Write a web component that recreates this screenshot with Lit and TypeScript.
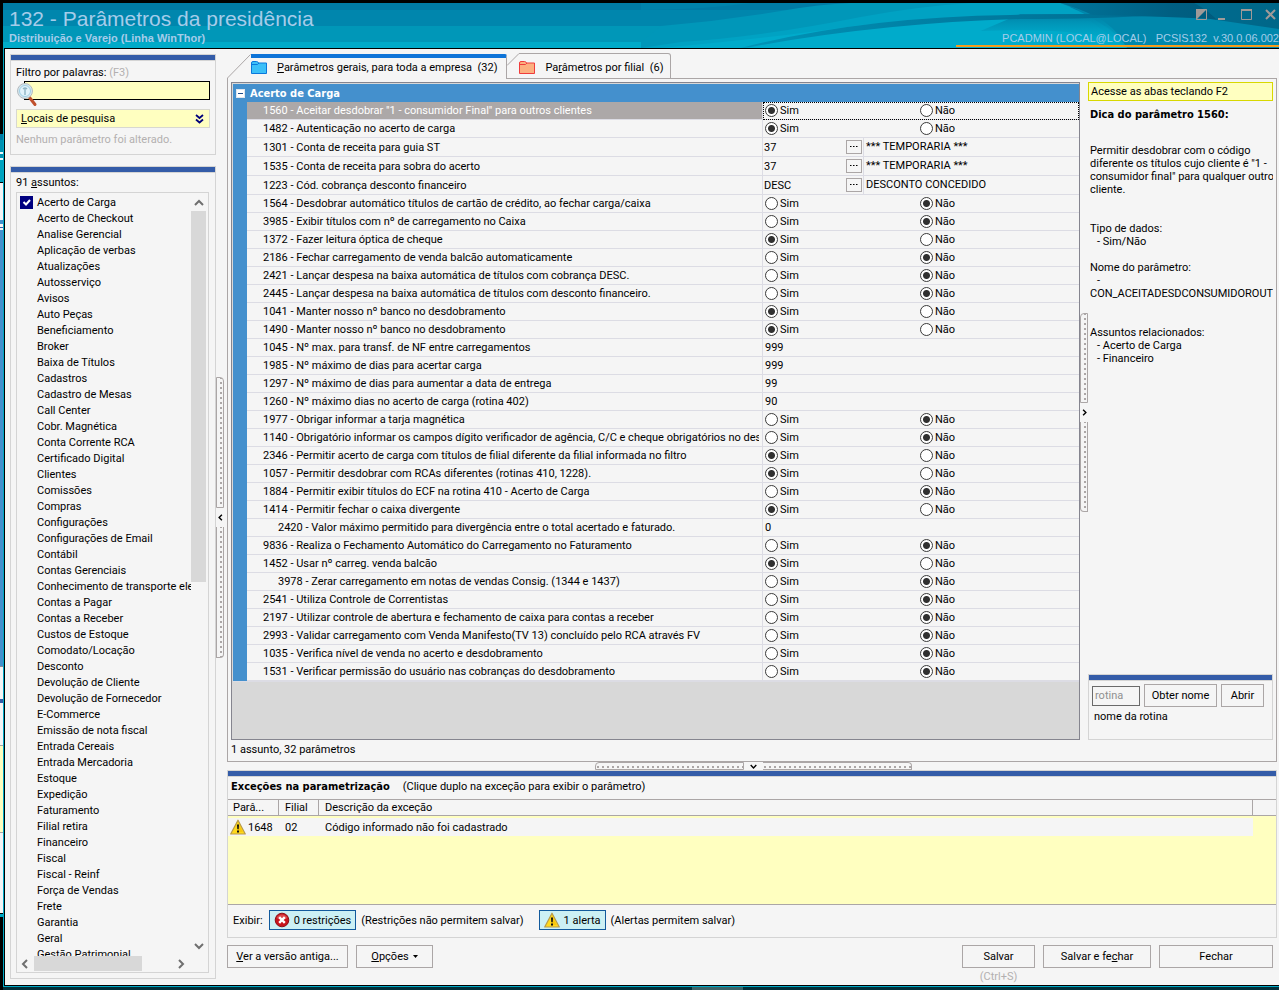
import { LitElement, html, css, svg, nothing } from "lit";
import { customElement, state } from "lit/decorators.js";
import { classMap } from "lit/directives/class-map.js";

type Param = {
  code: string;
  name: string;
  yes?: boolean;
  value?: string;
  lookup?: string;
  child?: boolean;
};

const yn = (code: string, name: string, yes: boolean, child = false): Param => ({ code, name, yes, child });
const val = (code: string, name: string, value: string, child = false): Param => ({ code, name, value, child });

const PARAMS: Param[] = [
  yn("1560", 'Aceitar desdobrar "1 - consumidor Final" para outros clientes', true),
  yn("1482", "Autenticação no acerto de carga", true),
  { code: "1301", name: "Conta de receita para guia ST", value: "37", lookup: "*** TEMPORARIA ***" },
  { code: "1535", name: "Conta de receita para sobra do acerto", value: "37", lookup: "*** TEMPORARIA ***" },
  { code: "1223", name: "Cód. cobrança desconto financeiro", value: "DESC", lookup: "DESCONTO CONCEDIDO" },
  yn("1564", "Desdobrar automático títulos de cartão de crédito, ao fechar carga/caixa", false),
  yn("3985", "Exibir títulos com nº de carregamento no Caixa", false),
  yn("1372", "Fazer leitura óptica de cheque", true),
  yn("2186", "Fechar carregamento de venda balcão automaticamente", false),
  yn("2421", "Lançar despesa na baixa automática de títulos com cobrança DESC.", false),
  yn("2445", "Lançar despesa na baixa automática de títulos com desconto financeiro.", false),
  yn("1041", "Manter nosso nº banco no desdobramento", true),
  yn("1490", "Manter nosso nº banco no desdobramento", true),
  val("1045", "Nº max. para transf. de NF entre carregamentos", "999"),
  val("1985", "Nº máximo de dias para acertar carga", "999"),
  val("1297", "Nº máximo de dias para aumentar a data de entrega", "99"),
  val("1260", "Nº máximo dias no acerto de carga (rotina 402)", "90"),
  yn("1977", "Obrigar informar a tarja magnética", false),
  yn("1140", "Obrigatório informar os campos dígito verificador de agência, C/C e cheque obrigatórios no desdobramento", false),
  yn("2346", "Permitir acerto de carga com títulos de filial diferente da filial informada no filtro", true),
  yn("1057", "Permitir desdobrar com RCAs diferentes (rotinas 410, 1228).", true),
  yn("1884", "Permitir exibir títulos do ECF na rotina 410 - Acerto de Carga", false),
  yn("1414", "Permitir fechar o caixa divergente", true),
  val("2420", "Valor máximo permitido para divergência entre o total acertado e faturado.", "0", true),
  yn("9836", "Realiza o Fechamento Automático do Carregamento no Faturamento", false),
  yn("1452", "Usar nº carreg. venda balcão", true),
  yn("3978", "Zerar carregamento em notas de vendas Consig. (1344 e 1437)", false, true),
  yn("2541", "Utiliza Controle de Correntistas", false),
  yn("2197", "Utilizar controle de abertura e fechamento de caixa para contas a receber", false),
  yn("2993", "Validar carregamento com Venda Manifesto(TV 13) concluído pelo RCA através FV", false),
  yn("1035", "Verifica nível de venda no acerto e desdobramento", false),
  yn("1531", "Verificar permissão do usuário nas cobranças do desdobramento", false),
];

const SUBJECTS = [
  "Acerto de Carga", "Acerto de Checkout", "Analise Gerencial", "Aplicação de verbas", "Atualizações",
  "Autosserviço", "Avisos", "Auto Peças", "Beneficiamento", "Broker", "Baixa de Títulos", "Cadastros",
  "Cadastro de Mesas", "Call Center", "Cobr. Magnética", "Conta Corrente RCA", "Certificado Digital",
  "Clientes", "Comissões", "Compras", "Configurações", "Configurações de Email", "Contábil",
  "Contas Gerenciais", "Conhecimento de transporte eletrônico", "Contas a Pagar", "Contas a Receber",
  "Custos de Estoque", "Comodato/Locação", "Desconto", "Devolução de Cliente", "Devolução de Fornecedor",
  "E-Commerce", "Emissão de nota fiscal", "Entrada Cereais", "Entrada Mercadoria", "Estoque", "Expedição",
  "Faturamento", "Filial retira", "Financeiro", "Fiscal", "Fiscal - Reinf", "Força de Vendas", "Frete",
  "Garantia", "Geral", "Gestão Patrimonial",
];

const chevron = (dir: "up" | "down" | "left" | "right") => {
  const d = {
    up: "M1 7 L5 3 L9 7",
    down: "M1 3 L5 7 L9 3",
    left: "M7 1 L3 5 L7 9",
    right: "M3 1 L7 5 L3 9",
  }[dir];
  return html`<svg class="chevron" viewBox="0 0 10 10" aria-hidden="true">
    <path d=${d} fill="none" stroke="currentColor" stroke-width="2" />
  </svg>`;
};

const folder = (edge: string, fill: string) => html`<svg class="folder" viewBox="0 0 16 13" aria-hidden="true">
  <path d="M.5 12.5V2Q.5.5 2 .5H5.500Q7 .5 7.500 2H15.500V12.500Z" fill=${fill} stroke=${edge} />
  <path d="M1 3.500H6.500L8 2" fill="none" stroke=${edge} />
</svg>`;

const warning = html`<svg class="status-icon" viewBox="0 0 16 16" aria-hidden="true">
  <path d="M8 1.200L15.300 15H.7Z" fill="#ffd91c" stroke="#b89a4a" stroke-width="1.200" stroke-linejoin="round" />
  <path d="M8 3.500L12.800 13H8Z" fill="#f3b800" opacity=".55" />
  <path d="M7 5.500H9L8.700 10.300H7.300ZM7 11.400H9V13.400H7Z" fill="#111" />
</svg>`;

const restriction = html`<svg class="status-icon" viewBox="0 0 16 16" aria-hidden="true">
  <circle cx="8" cy="8" r="6.800" fill="#c8141c" stroke="#8c1016" />
  <path d="M2.500 6A6 6 0 0 1 13.500 6Q8 9 2.500 6Z" fill="#f07a7a" opacity=".5" />
  <path d="M5.200 5.200L10.800 10.800M10.800 5.200L5.200 10.800" stroke="#fff" stroke-width="2.400" />
</svg>`;

const magnifier = html`<svg class="magnifier" viewBox="0 0 22 26" aria-hidden="true">
  <path d="M13.500 15.500L19 22.500" stroke="#c0502c" stroke-width="3" stroke-linecap="round" />
  <circle cx="9" cy="9" r="7.500" fill="#d6e6ee" stroke="#b4bcc0" />
  <circle cx="9" cy="9" r="5.500" fill="#e2f3fb" stroke="#9fd0e6" />
  <path d="M9 5.500V13M7 7Q9 5 11 7" stroke="#8fb4c4" stroke-width="1.400" fill="none" />
</svg>`;

const banner = svg`
  <defs>
    <linearGradient id="lens" x1="0" x2="1"><stop offset="0" stop-color="#0095b8" /><stop offset=".4" stop-color="#0081a6" /><stop offset="1" stop-color="#006c90" /></linearGradient>
    <linearGradient id="fade" x1="0" x2="0" y1="0" y2="1"><stop offset="0" stop-color="#0081a6" /><stop offset=".7" stop-color="#00a2c3" stop-opacity=".6" /><stop offset="1" stop-color="#00abcb" stop-opacity="0" /></linearGradient>
    <linearGradient id="corner" x1="0" x2="1"><stop offset="0" stop-color="#00749a" /><stop offset=".5" stop-color="#005f82" /><stop offset="1" stop-color="#005676" /></linearGradient>
  </defs>
  <path d="M0 7Q60 7 110 0H0Z" fill="#0082aa" />
  <path d="M20 23Q80 18 140 8Q180 1 210 0H430V45H0V39Z" fill="#0097b9" />
  <path d="M40 39Q120 34 220 14Q280 3 330 0H420Q470 20 487 45H0Z" fill="#00a2c3" />
  <path d="M20 45Q140 34 220 22Q330 12 450 18L487 45Z" fill="#00abcb" />
  <path d="M420 0Q468 16 487 45H639V0Z" fill="#0088ac" />
  <path d="M380 11H452Q475 24 484 40Q440 24 340 28Z" fill="url(#fade)" />
  <path d="M100 45Q220 14 370 12Q450 10 520 12Q460 16 380 16Q240 20 110 44Z" fill="url(#lens)" />
  <path d="M420 0Q440 6 452 12Q540 14 570 16L639 26V0Z" fill="url(#corner)" />
  <path d="M554 0Q584 16 592 43H639V0Z" fill="#0088ac" opacity=".35" />
`;

@customElement("app-root")
export class AppRoot extends LitElement {
  @state() private selected = "1560";

  static styles = css`
    :host {
      display: block;
      height: 100vh;
      overflow: hidden;
      background: #000;
      color: #000;
      font: 11px/13px Roboto, "DejaVu Sans Condensed", sans-serif;
    }
    * { box-sizing: border-box; }
    svg { display: block; flex: none; }
    button, input { font: inherit; color: inherit; margin: 0; }
    button { padding: 0; border-radius: 0; background: #f5f5f5; border: 1px solid #aba6a6; white-space: nowrap; }
    u { text-underline-offset: 1px; }
    h1, h2, h3, p { margin: 0; font-size: inherit; }

    .desktop { display: grid; grid-template: minmax(0, 1fr) / 3px minmax(0, 1fr); height: 100%; padding-top: 3px; }
    .behind { display: flex; flex-direction: column; overflow: hidden; }
    .behind i { flex: none; }
    .bh-black { height: 131px; }
    .bh-cyan { height: 48px; background: linear-gradient(#0079a4 0 6px, #0091b2 6px 18px, #f0f8fa 18px 20px, #0091b2 20px 24px, #f0f8fa 24px 26px, #00a3bf 26px); }
    .bh-light { height: 38px; background: #f5f5f5; border-top: 1px solid #000; }
    .bh-tab { height: 10px; background: linear-gradient(#4490cd 0 4px, #f5f5f5 4px 7px, #345ca8 7px 8px, #f5f5f5 8px); }
    .bh-blue { height: 436px; background: #4490cd; }
    .bh-panel { height: 79px; background: linear-gradient(#8a8a94 0 1px, #f5f5f5 1px 33px, #345ca8 33px 37px, #f5f5f5 37px); }
    .bh-yellow { height: 87px; background: #ffffc0; border-top: 1px solid #aba6a6; }
    .bh-foot { height: 81px; background: #f5f5f5; border-top: 1px solid #aba6a6; }
    .bh-edge { height: 4px; background: #00a9c6; border-top: 1px solid #000; }

    .window { display: flex; flex-direction: column; min-width: 0; }
    .titlebar {
      position: relative; flex: none; display: flex; justify-content: space-between; height: 45px; overflow: hidden;
      color: #a5cdea; font-family: "Liberation Sans", Arial, sans-serif;
      background: linear-gradient(#007ba5 0 7px, #0086ad 7px 23px, #0097b8 23px 39px, #00abc9 39px);
    }
    .titlebar-art { position: absolute; inset: 0 0 0 auto; width: 50%; height: 100%; }
    .title { position: relative; padding: 4px 0 0 6px; }
    .title h1 { font-size: 21px; line-height: 24px; font-weight: 400; }
    .title p { font-size: 11px; line-height: 14px; font-weight: 700; }
    .session { position: relative; display: flex; flex-direction: column; justify-content: space-between; align-items: flex-end; padding-top: 5px; }
    .window-buttons { display: flex; gap: 7px; }
    .window-buttons button { width: 16px; height: 14px; border: 0; background: none; color: #a09a98; }
    .window-buttons svg { width: 16px; height: 14px; }
    .session p { font-size: 11px; line-height: 13px; border-bottom: 2px solid #f79c1c; padding-left: 46px; margin-bottom: 1px; white-space: pre; }

    .frame { flex: 1; min-height: 0; display: flex; flex-direction: column; border-bottom: 1px solid #00a9c6; border-left: 1px solid #00a9c6; }
    .body { flex: 1; min-height: 0; display: flex; padding: 4px 2px 6px 5px; background: #f5f5f5; border: solid #000; border-width: 1px 0 1px 1px; }
    .below { flex: none; height: 3px; background: linear-gradient(90deg, #02303a 0 54%, #3c6468 54% 58%, #02303a 58%); }

    .side { flex: none; width: 206px; display: flex; flex-direction: column; gap: 11px; padding-top: 1px; }
    .panel { border: 1px solid #d4d4d4; }
    .panel::before { content: ""; display: block; flex: none; height: 5px; background: #345ca8; border-bottom: 1px solid #d4d4d4; }
    .filter { flex: none; height: 101px; }
    .filter-inner { padding: 5px 5px 0; }
    .muted { color: #b3b0b0; }
    .search { position: relative; padding: 2px 0 9px 8px; }
    .search input { display: block; width: 100%; height: 19px; padding: 0 4px 0 14px; border: 1px solid #000; border-radius: 0; background: #ffffc0; outline: 0; }
    .magnifier { position: absolute; left: 0; top: 3px; width: 22px; height: 26px; }
    .places { display: flex; width: 100%; height: 19px; align-items: center; justify-content: space-between; padding: 0 5px 0 4px; background: #ffffc0; border-color: #d8d8d0; }
    .double { width: 9px; height: 10px; color: #00007a; }
    .altered { padding-top: 5px; white-space: nowrap; }

    .subjects { flex: 1; min-height: 0; display: flex; flex-direction: column; }
    .subjects h2 { font-weight: 400; }
    .subjects-inner { flex: 1; min-height: 0; display: flex; flex-direction: column; gap: 3px; padding: 3px 6px 5px 5px; }
    .listbox { flex: 1; min-height: 0; display: grid; grid-template: minmax(0, 1fr) 16px / minmax(0, 1fr) 17px; border: 1px solid #d4d4d4; }
    .items { list-style: none; margin: 0; padding: 1px 0 0; overflow: hidden; }
    .items label { display: flex; align-items: center; gap: 4px; height: 16px; padding-left: 3px; white-space: nowrap; }
    .items input { display: block; appearance: none; width: 13px; height: 13px; }
    .items input:checked { background: #000080; }
    .tick { position: relative; flex: none; width: 13px; height: 13px; }
    .tick svg { position: absolute; inset: 0; width: 13px; height: 13px; pointer-events: none; }
    .vbar { display: flex; flex-direction: column; align-items: center; color: #6f6f6f; padding: 5px 2px 5px 0; }
    .vbar .track { flex: 1; width: 100%; padding: 3px 0; }
    .hbar { display: flex; align-items: center; color: #6f6f6f; padding: 0 5px 0 3px; }
    .hbar .track { flex: 1; height: 100%; padding: 0 4px; }
    .thumb { display: block; background: #d8d8d8; }
    .vbar .thumb { height: 51%; }
    .hbar .thumb { width: 78%; height: 15px; }
    .chevron { width: 10px; height: 10px; }

    .split { flex: none; display: flex; color: #000; }
    .split .chevron { width: 7px; height: 7px; }
    .split b { display: block; border: 1px solid #aba6a6; }
    .split.v { flex-direction: column; align-items: center; justify-content: center; width: 8px; gap: 6px; padding-top: 3px; }
    .split.v b { width: 8px; height: 131px; background: linear-gradient(#aba6a6 2px, transparent 2px) 3px 4px / 2px 5px repeat-y; }
    .split.h { align-items: center; justify-content: center; height: 8px; gap: 6px; padding-left: 2px; }
    .split.h b { width: 149px; height: 8px; background: linear-gradient(90deg, #aba6a6 2px, transparent 2px) 6px 3px / 5px 2px repeat-x; }
    .side-split { margin-right: 3px; }
    .side-split b:first-child { border-radius: 0 4px 0 0; }
    .side-split b:last-child { border-radius: 0 0 4px 0; border-top: 0; }
    .tip-split b:first-child { border-radius: 4px 0 0 0; }
    .tip-split b:last-child { border-radius: 0 0 0 4px; border-top: 0; }
    .tip-split.split.v b { height: 90px; }
    .base-split b:first-child { border-radius: 4px 0 0 0; }
    .base-split b:last-child { border-radius: 0 4px 0 0; border-left: 0; }

    .main { flex: 1; min-width: 0; display: flex; flex-direction: column; }
    .tabs { flex: none; display: flex; height: 26px; }
    .tab { display: flex; align-items: center; height: 26px; border: 0; border-right: 1px solid #aba6a6; background: none; text-align: left; }
    .slope { height: 26px; }
    .tab-active { border-top: 4px solid #0e74d8; border-top-right-radius: 2px; margin-top: 1px; height: 25px; padding: 0 9px 2px 0; }
    .tab-other { border-top: 1px solid #aba6a6; border-bottom: 1px solid #aba6a6; border-top-right-radius: 3px; padding: 3px 7px 0 0; }
    .tab-rest { flex: 1; border-bottom: 1px solid #aba6a6; }
    .folder { width: 16px; height: 13px; margin-right: 10px; }

    .page { flex: 1; min-height: 0; display: flex; flex-direction: column; padding: 3px 3px 5px 3px; border: 1px solid #aba6a6; border-top: 0; }
    .page-main { flex: 1; min-height: 0; display: flex; }
    .grid { flex: 1; min-width: 0; border: 1px solid #85858f; background: #d8d8d8; overflow: hidden; padding: 1px 0 0 1px; }
    .group { background: #4490cd; border-bottom: 1px solid #dcdce4; }
    .group h2 { display: flex; align-items: center; gap: 5px; height: 18px; padding-left: 3px; color: #fff; }
    .group h2, .tip h3, strong { font-family: "DejaVu Sans Condensed", "DejaVu Sans", sans-serif; font-weight: 700; }
    .group h2 button { display: flex; align-items: center; justify-content: center; width: 9px; height: 9px; border: 1px solid #e0e6ee; background: #fff; color: #1c4c8c; }
    .group h2 button svg { width: 7px; height: 7px; }
    .params { table-layout: fixed; border-collapse: separate; border-spacing: 0; width: calc(100% - 14px); margin-left: 14px; background: #f5f5f5; }
    .col-value { width: 316px; }
    .params td, .params th { padding: 0; height: 18px; border-bottom: 1px solid #dcdce4; font-weight: 400; text-align: left; white-space: nowrap; overflow: hidden; }
    .params th { padding: 0 3px 0 16px; border-right: 1px solid #dcdce4; }
    .params tr.child th { padding-left: 31px; }
    .params tr.tall td, .params tr.tall th { height: 19px; }
    .params tr.selected th { background: #aca8a8; color: #fff; }
    .params tr.selected td { outline: 1px dotted #000; outline-offset: -1px; }
    .clip { overflow: hidden; }
    .choices { display: flex; padding-left: 2px; }
    .choices label { display: flex; align-items: center; gap: 2px; width: 155px; }
    .choices input { appearance: none; width: 13px; height: 13px; border: 1px solid #3a3a3a; border-radius: 50%; background: #fff; }
    .choices input:checked { background: radial-gradient(circle, #303030 3px, #fff 4px); }
    .plain { padding-left: 2px; }
    .lookup { display: flex; align-items: center; }
    .lookup span:first-child { width: 83px; padding-left: 1px; }
    .lookup button { display: flex; align-items: center; justify-content: center; width: 16px; height: 14px; }
    .lookup button svg { width: 8px; height: 2px; }
    .lookup span:last-child { border-left: 1px solid #dcdce4; margin-left: 1px; padding-left: 2px; line-height: 18px; }

    .tip { flex: none; width: 185px; display: flex; flex-direction: column; }
    .notice { flex: none; height: 19px; line-height: 17px; padding-left: 2px; margin-bottom: 7px; background: #ffffc0; border: 1px solid #d8d800; }
    .tip h3 { margin-bottom: 23px; padding-left: 2px; line-height: 13px; white-space: nowrap; }
    .tip p { padding-left: 2px; margin-bottom: 13px; white-space: nowrap; overflow: hidden; }
    .tip p.far { margin-bottom: 26px; }
    .sub { padding-left: 7px; }
    .routine { margin-top: auto; height: 66px; }
    .routine-row { display: flex; align-items: center; gap: 4px; padding: 3px 3px 3px; }
    .routine-row input { width: 48px; height: 20px; padding: 0 2px; border: 1px solid #6a6a6a; border-radius: 0; background: #f5f5f5; }
    .routine-row input::placeholder { color: #909090; opacity: 1; }
    .routine-row button { height: 23px; width: 73px; }
    .routine-row button:last-child { width: 43px; }
    .routine-name { padding-left: 5px; }
    .count { padding-top: 3px; }

    .exceptions { flex: none; display: flex; flex-direction: column; }
    .exceptions-head { display: flex; gap: 13px; padding: 3px 3px 6px; }
    .exceptions-list { height: 106px; background: #ffffc0; border: solid #aba6a6; border-width: 1px 0; }
    .exceptions table { width: 100%; table-layout: fixed; border-collapse: separate; border-spacing: 0; }
    .c-code { width: 51px; }
    .c-branch { width: 40px; }
    .c-rest { width: 23px; }
    .exceptions th { height: 16px; padding: 0 5px; text-align: left; font-weight: 400; background: #f5f5f5; border: solid #aba6a6; border-width: 0 1px 1px 0; line-height: 15px; }
    .exceptions th + th { padding-left: 6px; }
    .exceptions th:last-child { border-right: 0; }
    .exceptions tbody::before { content: ""; display: block; height: 2px; }
    .exceptions td { height: 18px; padding: 0 6px; background: #f5f5f5; }
    .exceptions td:first-child { padding: 0; }
    .exceptions td:last-child { background: none; }
    .exceptions .code { display: flex; align-items: center; gap: 2px; padding: 0 2px; }
    .status-icon { width: 16px; height: 16px; }
    .show { display: flex; align-items: center; height: 32px; padding: 0 0 2px 5px; }
    .chip { display: flex; align-items: center; gap: 4px; height: 20px; padding: 0 4px; margin: 0 5px 0 15px; background: #ccf0f4; border: 1px solid #125a9c; }
    .show .first { margin-left: 6px; }

    .actions { flex: none; display: flex; align-items: flex-start; gap: 8px; height: 41px; padding: 7px 4px 0 0; }
    .actions button { height: 23px; }
    .actions .push { margin-left: auto; }
    .a-old { width: 121px; }
    .a-options { width: 77px; display: flex; align-items: center; justify-content: center; gap: 4px; }
    .a-options svg { width: 5px; height: 3px; }
    .a-save { display: flex; flex-direction: column; align-items: center; gap: 2px; }
    .a-save button { width: 73px; }
    .a-saveclose { width: 108px; }
    .a-close { width: 114px; }
  `;

  private renderValue(p: Param) {
    if (p.yes !== undefined) {
      return html`<div class="choices" role="radiogroup" aria-label=${p.name}>
        <label><input type="radio" name=${"p" + p.code} .checked=${p.yes} />Sim</label>
        <label><input type="radio" name=${"p" + p.code} .checked=${!p.yes} />Não</label>
      </div>`;
    }
    if (p.lookup) {
      return html`<div class="lookup">
        <span>${p.value}</span>
        <button aria-label="Procurar">
          <svg viewBox="0 0 8 2"><path d="M0 .5H1.500M3 .5H4.500M6 .5H7.500" stroke="#000" /></svg>
        </button>
        <span>${p.lookup}</span>
      </div>`;
    }
    return html`<div class="plain">${p.value}</div>`;
  }

  private renderSide() {
    return html`<aside class="side">
      <section class="panel filter">
        <div class="filter-inner">
          <label for="filter">Filtro por palavras: <span class="muted">(F3)</span></label>
          <div class="search"><input id="filter" type="text" />${magnifier}</div>
          <button class="places">
            <span><u>L</u>ocais de pesquisa</span>
            <svg class="double" viewBox="0 0 9 10"><path d="M1 1L4.500 4L8 1M1 5.500L4.500 8.500L8 5.500" fill="none" stroke="currentColor" stroke-width="1.800" /></svg>
          </button>
          <p class="altered muted">Nenhum parâmetro foi alterado.</p>
        </div>
      </section>
      <section class="panel subjects">
        <div class="subjects-inner">
          <h2>91 <u>a</u>ssuntos:</h2>
          <div class="listbox">
            <ul class="items">
              ${SUBJECTS.map((s, i) => html`<li><label>
                <span class="tick"><input type="checkbox" .checked=${i === 0} />${i === 0
                  ? html`<svg viewBox="0 0 13 13"><path d="M3.500 6L6 8.500L10 4" fill="none" stroke="#fff" stroke-width="2" /></svg>`
                  : nothing}</span>${s}</label></li>`)}
            </ul>
            <div class="vbar">${chevron("up")}<span class="track"><i class="thumb"></i></span>${chevron("down")}</div>
            <div class="hbar">${chevron("left")}<span class="track"><i class="thumb"></i></span>${chevron("right")}</div>
          </div>
        </div>
      </section>
    </aside>`;
  }

  private renderTabs() {
    return html`<div class="tabs" role="tablist">
      <svg class="slope" width="24" viewBox="0 0 24 26"><path d="M.5 26V25L23.500 1.500" fill="none" stroke="#aba6a6" /></svg>
      <button class="tab tab-active" role="tab" aria-selected="true">${folder("#0a78dc", "#3cc0f8")}<span><u>P</u>arâmetros gerais, para toda a empresa&nbsp; (32)</span></button>
      <svg class="slope" width="12" viewBox="0 0 12 26"><path d="M0 12.500L12 .5M0 25.500H12" fill="none" stroke="#aba6a6" /></svg>
      <button class="tab tab-other" role="tab" aria-selected="false">${folder("#f03c3c", "#fcb080")}<span>Pa<u>r</u>âmetros por filial&nbsp; (6)</span></button>
      <span class="tab-rest"></span>
    </div>`;
  }

  private renderGrid() {
    return html`<div class="grid">
      <section class="group">
        <h2><button aria-label="Recolher"><svg viewBox="0 0 7 7"><path d="M1 3.500H6" stroke="currentColor" /></svg></button>Acerto de Carga</h2>
        <table class="params">
          <colgroup><col /><col class="col-value" /></colgroup>
          <tbody>
            ${PARAMS.map((p) => html`<tr
              class=${classMap({ child: !!p.child, tall: !!p.lookup, selected: p.code === this.selected })}
              @click=${() => (this.selected = p.code)}>
              <th scope="row"><div class="clip">${p.code} - ${p.name}</div></th>
              <td>${this.renderValue(p)}</td>
            </tr>`)}
          </tbody>
        </table>
      </section>
    </div>`;
  }

  private renderTip() {
    return html`<aside class="tip">
      <div class="notice">Acesse as abas teclando F2</div>
      <h3>Dica do parâmetro 1560:</h3>
      <p class="far">Permitir desdobrar com o código<br />diferente os títulos cujo cliente é "1 -<br />consumidor final" para qualquer outro<br />cliente.</p>
      <p>Tipo de dados:<br /><span class="sub">- Sim/Não</span></p>
      <p class="far">Nome do parâmetro:<br /><span class="sub">-</span><br />CON_ACEITADESDCONSUMIDOROUTROCLI</p>
      <p>Assuntos relacionados:<br /><span class="sub">- Acerto de Carga</span><br /><span class="sub">- Financeiro</span></p>
      <section class="panel routine">
        <div class="routine-row">
          <input type="text" placeholder="rotina" aria-label="Rotina" />
          <button>Obter nome</button>
          <button>Abrir</button>
        </div>
        <div class="routine-name">nome da rotina</div>
      </section>
    </aside>`;
  }

  private renderExceptions() {
    return html`<section class="panel exceptions">
      <div class="exceptions-head"><strong>Exceções na parametrização</strong><span>(Clique duplo na exceção para exibir o parâmetro)</span></div>
      <div class="exceptions-list">
        <table>
          <colgroup><col class="c-code" /><col class="c-branch" /><col /><col class="c-rest" /></colgroup>
          <thead><tr><th>Parâ...</th><th>Filial</th><th>Descrição da exceção</th><th></th></tr></thead>
          <tbody><tr><td><div class="code">${warning}1648</div></td><td>02</td><td>Código informado não foi cadastrado</td><td></td></tr></tbody>
        </table>
      </div>
      <div class="show">
        <span>Exibir:</span>
        <button class="chip first">${restriction}0 restrições</button><span>(Restrições não permitem salvar)</span>
        <button class="chip">${warning}1 alerta</button><span>(Alertas permitem salvar)</span>
      </div>
    </section>`;
  }

  render() {
    return html`<div class="desktop">
      <div class="behind" aria-hidden="true">
        <i class="bh-black"></i><i class="bh-cyan"></i><i class="bh-light"></i><i class="bh-tab"></i><i class="bh-blue"></i>
        <i class="bh-panel"></i><i class="bh-yellow"></i><i class="bh-foot"></i><i class="bh-edge"></i>
      </div>
      <div class="window">
        <header class="titlebar">
          <svg class="titlebar-art" viewBox="0 0 639 45" preserveAspectRatio="none" aria-hidden="true">${banner}</svg>
          <div class="title"><h1>132 - Parâmetros da presidência</h1><p>Distribuição e Varejo (Linha WinThor)</p></div>
          <div class="session">
            <div class="window-buttons">
              <button aria-label="Tema"><svg viewBox="0 0 16 14"><path d="M2.500 1.500H12.500V11.500H2.500Z" fill="none" stroke="currentColor" /><path d="M2 1H13L2 12Z" fill="currentColor" /></svg></button>
              <button aria-label="Minimizar"><svg viewBox="0 0 16 14"><path d="M1 11H8" stroke="currentColor" stroke-width="2" /></svg></button>
              <button aria-label="Maximizar"><svg viewBox="0 0 16 14"><path d="M1.500 2.500H11.500V11.500H1.500Z" fill="none" stroke="currentColor" /><path d="M1 2H12" stroke="currentColor" stroke-width="2" /></svg></button>
              <button aria-label="Fechar janela"><svg viewBox="0 0 16 14"><path d="M3 2L12 11M12 2L3 11" stroke="currentColor" stroke-width="2" /></svg></button>
            </div>
            <p>PCADMIN (LOCAL@LOCAL)   PCSIS132  v.30.0.06.002</p>
          </div>
        </header>
        <div class="frame"><div class="body">
          ${this.renderSide()}
          <div class="split v side-split"><b></b>${chevron("left")}<b></b></div>
          <main class="main">
            ${this.renderTabs()}
            <div class="page">
              <div class="page-main">
                ${this.renderGrid()}
                <div class="split v tip-split"><b></b>${chevron("right")}<b></b></div>
                ${this.renderTip()}
              </div>
              <p class="count">1 assunto, 32 parâmetros</p>
            </div>
            <div class="split h base-split"><b></b>${chevron("down")}<b></b></div>
            ${this.renderExceptions()}
            <div class="actions">
              <button class="a-old"><u>V</u>er a versão antiga...</button>
              <button class="a-options"><span><u>O</u>pções</span><svg viewBox="0 0 5 3"><path d="M0 0H5L2.500 3Z" fill="#000" /></svg></button>
              <div class="a-save push"><button>Salvar</button><span class="muted">(Ctrl+S)</span></div>
              <button class="a-saveclose">Salvar e fe<u>c</u>har</button>
              <button class="a-close">Fechar</button>
            </div>
          </main>
        </div></div>
        <div class="below"></div>
      </div>
    </div>`;
  }
}
